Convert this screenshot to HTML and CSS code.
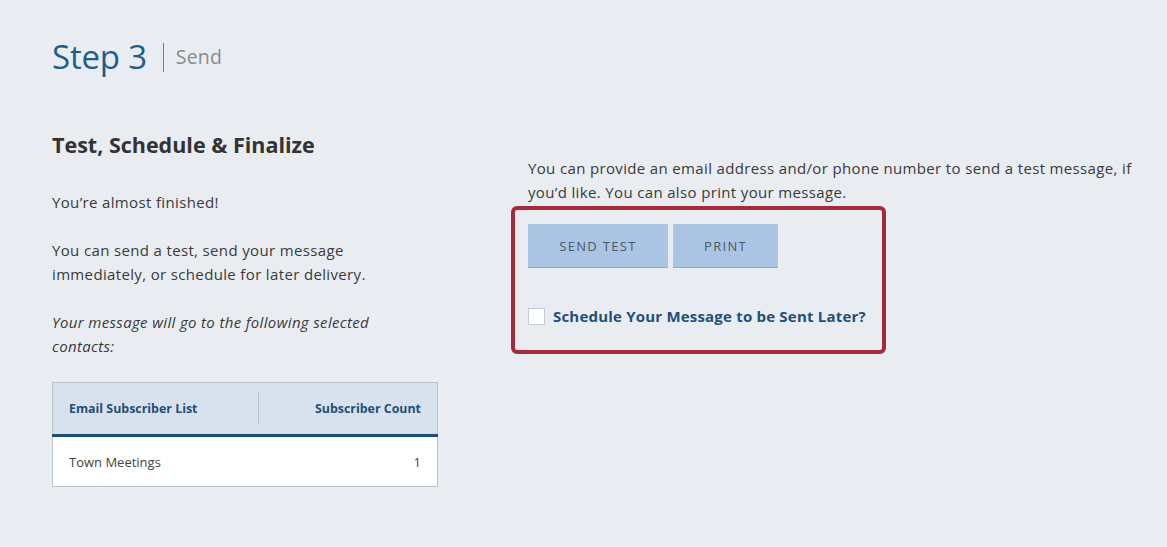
FILE: index.html
```html
<!DOCTYPE html>
<html lang="en">
<head>
<meta charset="utf-8">
<title>Step 3 - Send</title>
<link rel="stylesheet" href="styles.css">
</head>
<body>
<div class="page">
  <header class="step-head">
    <h1 class="step-title">Step 3</h1>
    <span class="step-divider"></span>
    <span class="step-sub">Send</span>
  </header>
  <div class="columns">
    <section class="left">
      <h2 class="section-title">Test, Schedule &amp; Finalize</h2>
      <p class="para">You’re almost finished!</p>
      <p class="para">You can send a test, send your message immediately, or schedule for later delivery.</p>
      <p class="para italic">Your message will go to the following selected contacts:</p>
      <table class="list-table">
        <thead>
          <tr>
            <th class="col-name"><span>Email Subscriber List</span></th>
            <th class="col-count"><span>Subscriber Count</span></th>
          </tr>
        </thead>
        <tbody>
          <tr>
            <td class="col-name">Town Meetings</td>
            <td class="col-count">1</td>
          </tr>
        </tbody>
      </table>
    </section>
    <section class="right">
      <p class="para intro">You can provide an email address and/or phone number to send a test message, if you’d like. You can also print your message.</p>
      <div class="highlight">
        <div class="btn-row">
          <button class="btn btn-test">SEND TEST</button>
          <button class="btn btn-print">PRINT</button>
        </div>
        <label class="check-row">
          <span class="checkbox"></span>
          <span class="check-label">Schedule Your Message to be Sent Later?</span>
        </label>
      </div>
    </section>
  </div>
</div>
</body>
</html>
```
FILE: styles.css
```css
* { box-sizing: border-box; }
html, body {
  margin: 0;
  padding: 0;
  background: #e9edf1;
}
body {
  font-family: "Open Sans", "Noto Sans", sans-serif;
  color: #3a3a3a;
  height: 547px;
  overflow: hidden;
}
.page {
  padding: 35px 0 0 52px;
}
.step-head {
  display: flex;
  align-items: center;
  height: 44px;
}
.step-title {
  margin: 0;
  font-weight: 400;
  font-size: 33px;
  color: #1f5d8c;
  line-height: 44px;
  letter-spacing: -0.2px;
}
.step-divider {
  width: 1px;
  height: 29px;
  background: #808080;
  margin: 1px 12px 0 16px;
}
.step-sub {
  font-size: 19.5px;
  color: #8a8a8a;
  line-height: 44px;
  letter-spacing: 0.2px;
}
.columns {
  display: flex;
  gap: 90px;
  margin-top: 51px;
}
.left {
  width: 386px;
  flex: none;
}
.right {
  width: 615px;
  padding-top: 26px;
}
.section-title {
  margin: 0 0 30px;
  font-size: 21.5px;
  font-weight: 700;
  color: #333;
  line-height: 30px;
}
.para {
  margin: 0 0 24px;
  font-size: 15px;
  letter-spacing: 0.35px;
  line-height: 24px;
  color: #3a3a3a;
  max-width: 370px;
}
.italic { font-style: italic; }
.list-table {
  width: 386px;
  border-collapse: collapse;
  border: 1px solid #b9c3cd;
}
.list-table thead tr {
  background: #d7e2ee;
  border-bottom: 3px solid #1c4f7d;
}
.list-table th {
  height: 53px;
  padding: 0 16px;
  font-size: 12.4px;
  font-weight: 700;
  color: #1f4f7b;
}
.list-table th.col-name {
  text-align: left;
  position: relative;
}
.list-table th.col-name::after {
  content: "";
  position: absolute;
  right: 0;
  top: 10px;
  bottom: 9px;
  width: 1px;
  background: #b6c2cf;
}
.list-table th.col-count { text-align: right; }
.list-table tbody tr { background: #fff; }
.list-table td {
  height: 51px;
  padding: 0 16px;
  font-size: 13px;
  color: #444;
}
.list-table td.col-count { text-align: right; }
.intro {
  margin: 0 0 2px;
  max-width: 615px;
}
.highlight {
  width: 375px;
  margin-left: -17px;
  border: 4px solid #a52a37;
  border-radius: 6px;
  padding: 14px 13px 25px 13px;
}
.btn-row {
  display: flex;
  gap: 5px;
}
.btn {
  height: 44px;
  border: none;
  border-bottom: 1px solid #8eabc8;
  background: #a9c5e3;
  color: #4b5867;
  font-family: inherit;
  font-size: 13px;
  letter-spacing: 1.3px;
  padding: 0;
  cursor: pointer;
}
.btn-test { width: 140px; }
.btn-print { width: 105px; }
.check-row {
  display: flex;
  align-items: center;
  gap: 8px;
  margin-top: 39px;
  height: 18px;
}
.checkbox {
  width: 17px;
  height: 17px;
  background: #fff;
  border: 1px solid #c7ccd2;
  flex: none;
}
.check-label {
  font-size: 15px;
  font-weight: 700;
  letter-spacing: 0.2px;
  color: #1f4f7b;
}
```
